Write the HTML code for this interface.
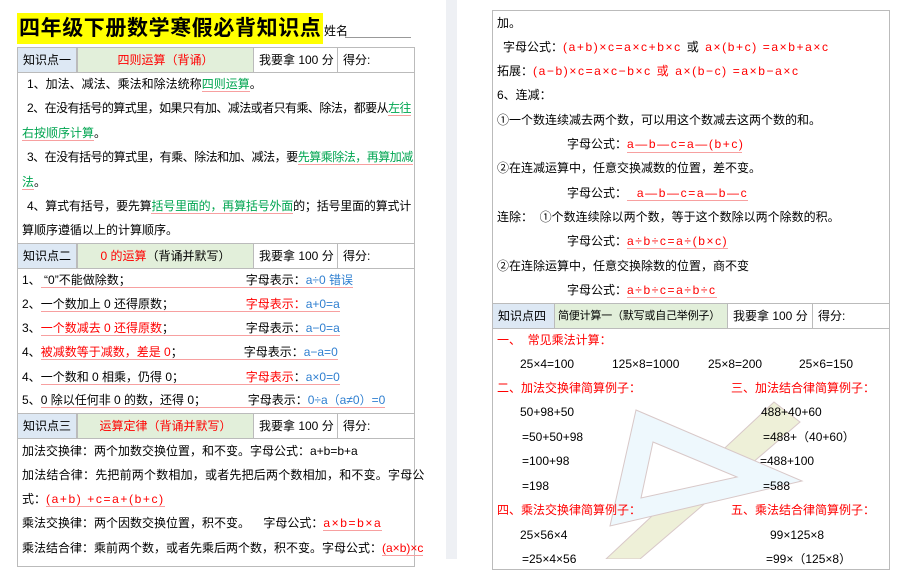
<!DOCTYPE html>
<html><head><meta charset="utf-8"><style>
*{margin:0;padding:0;box-sizing:border-box}
body{width:905px;height:559px;overflow:hidden;background:#fff;position:relative;font-family:"Liberation Sans","Noto Sans CJK SC",sans-serif;font-size:12px;color:#000}
.a{position:absolute;white-space:nowrap;line-height:16px}
.r{color:#f00}.g{color:#00a550}.b{color:#2f7fd0}
.u{border-bottom:1.5px solid #f7a0a0}
.box{position:absolute;border:1px solid #bbb}
.hd{position:absolute;border:1px solid #bbb;height:26px;line-height:24px;padding-left:5px;font-size:12px;overflow:hidden;white-space:nowrap}
.blue{background:#dde8f4}.grn{background:#e2efda}
.ls{letter-spacing:1.6px}
</style></head><body>
<div style="position:absolute;left:446px;top:0;width:11px;height:559px;background:#eef0f4"></div>

<div class="a" style="left:17px;top:13px;width:306px;height:31px;background:#ffff00"></div>
<div class="a" style="left:19px;top:14px;font-size:21px;line-height:30px;font-weight:bold;letter-spacing:0.6px">四年级下册数学寒假必背知识点</div>
<div class="a" style="left:324px;top:23px;font-size:12px">姓名</div>
<div style="position:absolute;left:345px;top:37px;width:66px;border-top:1px solid #999"></div>
<div class="box" style="left:17px;top:47px;width:398px;height:520px"></div>

<div class="hd blue" style="left:17px;top:47px;width:60px">知识点一</div>
<div class="hd grn r" style="left:77px;top:47px;width:177px;text-align:center;padding:0">四则运算（背诵）</div>
<div class="hd" style="left:253px;top:47px;width:85px">我要拿 100 分</div>
<div class="hd" style="left:337px;top:47px;width:78px">得分:</div>

<div class="a" style="left:27px;top:76px">1、加法、减法、乘法和除法统称<span class="g u">四则运算</span>。</div>
<div class="a" style="left:27px;top:100px;letter-spacing:-0.55px">2、在没有括号的算式里，如果只有加、减法或者只有乘、除法，都要从<span class="g u">左往</span></div>
<div class="a" style="left:22px;top:125px"><span class="g u">右按顺序计算</span>。</div>
<div class="a" style="left:27px;top:149px;letter-spacing:-0.5px">3、在没有括号的算式里，有乘、除法和加、减法，要<span class="g u">先算乘除法，再算加减</span></div>
<div class="a" style="left:22px;top:174px"><span class="g u">法</span>。</div>
<div class="a" style="left:27px;top:198px;letter-spacing:-0.2px">4、算式有括号，要先算<span class="g u">括号里面的，再算括号外面</span>的；括号里面的算式计</div>
<div class="a" style="left:22px;top:222px">算顺序遵循以上的计算顺序。</div>

<div class="hd blue" style="left:17px;top:243px;width:60px">知识点二</div>
<div class="hd grn" style="left:77px;top:243px;width:177px;text-align:center;padding:0"><span class="r">0 的运算</span>（背诵并默写）</div>
<div class="hd" style="left:253px;top:243px;width:85px">我要拿 100 分</div>
<div class="hd" style="left:337px;top:243px;width:78px">得分:</div>

<div class="a" style="left:22px;top:272px">1、<span class="u"><span style="display:inline-block;width:205px">&nbsp;“0”不能做除数；</span>字母表示：<span class="b">a÷0 错误</span></span></div>
<div class="a" style="left:22px;top:296px">2、<span class="u"><span style="display:inline-block;width:205px">一个数加上 0 还得原数；</span><span class="r">字母表示：</span><span class="b">a+0=a</span></span></div>
<div class="a" style="left:22px;top:320px">3、<span class="u"><span class="r" style="display:inline-block;width:205px">一个数减去 0 还得原数<span style="color:#000">；</span></span>字母表示：<span class="b">a−0=a</span></span></div>
<div class="a" style="left:22px;top:344px">4、<span class="u"><span class="r" style="display:inline-block;width:203px">被减数等于减数，差是 0<span style="color:#000">；</span></span>字母表示：<span class="b">a−a=0</span></span></div>
<div class="a" style="left:22px;top:369px">4、<span class="u"><span style="display:inline-block;width:205px">一个数和 0 相乘，仍得 0；</span><span class="r">字母表示</span>：<span class="b">a×0=0</span></span></div>
<div class="a" style="left:22px;top:392px">5、<span class="u"><span style="display:inline-block;width:207px">0 除以任何非 0 的数，还得 0；</span>字母表示：<span class="b">0÷a（a≠0）=0</span></span></div>

<div class="hd blue" style="left:17px;top:413px;width:60px">知识点三</div>
<div class="hd grn r" style="left:77px;top:413px;width:177px;text-align:center;padding:0">运算定律（背诵并默写）</div>
<div class="hd" style="left:253px;top:413px;width:85px">我要拿 100 分</div>
<div class="hd" style="left:337px;top:413px;width:78px">得分:</div>

<div class="a" style="left:22px;top:443px">加法交换律：两个加数交换位置，和不变。字母公式：a+b=b+a</div>
<div class="a" style="left:22px;top:467px;letter-spacing:0.2px">加法结合律：先把前两个数相加，或者先把后两个数相加，和不变。字母公</div>
<div class="a" style="left:22px;top:491px">式：<span class="r u ls">(a+b) +c=a+(b+c)</span></div>
<div class="a" style="left:22px;top:515px">乘法交换律：两个因数交换位置，积不变。&nbsp;&nbsp;&nbsp; 字母公式：<span class="r u ls">a×b=b×a</span></div>
<div class="a" style="left:22px;top:540px">乘法结合律：乘前两个数，或者先乘后两个数，积不变。字母公式：<span class="r u">(a×b)×c</span></div>

<div class="box" style="left:492px;top:10px;width:398px;height:560px"></div>
<div class="a" style="left:497px;top:15px">加。</div>
<div class="a" style="left:503px;top:39px">字母公式：<span class="r ls">(a+b)×c=a×c+b×c&nbsp;<span style="color:#000">或</span>&nbsp;a×(b+c) =a×b+a×c</span></div>
<div class="a" style="left:497px;top:63px">拓展：<span class="r ls">(a−b)×c=a×c−b×c&nbsp;或&nbsp;a×(b−c) =a×b−a×c</span></div>
<div class="a" style="left:497px;top:87px">6、连减：</div>
<div class="a" style="left:497px;top:112px">①一个数连续减去两个数，可以用这个数减去这两个数的和。</div>
<div class="a" style="left:567px;top:136px">字母公式：<span class="r u ls" style="display:inline-block;width:115px">a—b—c=a—(b+c)</span></div>
<div class="a" style="left:497px;top:160px">②在连减运算中，任意交换减数的位置，差不变。</div>
<div class="a" style="left:567px;top:185px">字母公式：<span class="r u ls">&nbsp; a—b—c=a—b—c</span></div>
<div class="a" style="left:497px;top:209px">连除：&nbsp; ①个数连续除以两个数，等于这个数除以两个除数的积。</div>
<div class="a" style="left:567px;top:233px">字母公式：<span class="r u ls">a÷b÷c=a÷(b×c)</span></div>
<div class="a" style="left:497px;top:258px">②在连除运算中，任意交换除数的位置，商不变</div>
<div class="a" style="left:567px;top:282px">字母公式：<span class="r u ls">a÷b÷c=a÷b÷c</span></div>

<div class="hd blue" style="left:492px;top:303px;width:63px">知识点四</div>
<div class="hd grn" style="left:554px;top:303px;width:174px;padding-left:3px;font-size:11px;letter-spacing:-0.2px">简便计算一（默写或自己举例子）</div>
<div class="hd" style="left:727px;top:303px;width:86px">我要拿 100 分</div>
<div class="hd" style="left:812px;top:303px;width:78px">得分:</div>

<svg style="position:absolute;left:0;top:0" width="905" height="559">
<polygon points="774,402 800,422 640,559 606,559" fill="#eef0d8" stroke="#d8c8c8" stroke-width="1"/>
<polygon points="636,410 802,481 610,526" fill="#eef8fd" stroke="#d8c8c8" stroke-width="1"/>
<polygon points="653,442 737,477 641,498" fill="#fff" stroke="#d8c8c8" stroke-width="1"/>
</svg>

<div class="a r" style="left:497px;top:332px">一、&nbsp; 常见乘法计算：</div>
<div class="a" style="left:520px;top:356px">25×4=100</div>
<div class="a" style="left:612px;top:356px">125×8=1000</div>
<div class="a" style="left:708px;top:356px">25×8=200</div>
<div class="a" style="left:799px;top:356px">25×6=150</div>
<div class="a r" style="left:497px;top:380px">二、加法交换律简算例子：</div>
<div class="a r" style="left:731px;top:380px">三、加法结合律简算例子：</div>
<div class="a" style="left:520px;top:404px">50+98+50</div>
<div class="a" style="left:761px;top:404px">488+40+60</div>
<div class="a" style="left:522px;top:429px">=50+50+98</div>
<div class="a" style="left:763px;top:429px">=488+（40+60）</div>
<div class="a" style="left:522px;top:453px">=100+98</div>
<div class="a" style="left:760px;top:453px">=488+100</div>
<div class="a" style="left:522px;top:478px">=198</div>
<div class="a" style="left:763px;top:478px">=588</div>
<div class="a r" style="left:497px;top:502px">四、乘法交换律简算例子：</div>
<div class="a r" style="left:731px;top:502px">五、乘法结合律简算例子：</div>
<div class="a" style="left:520px;top:527px">25×56×4</div>
<div class="a" style="left:770px;top:527px">99×125×8</div>
<div class="a" style="left:522px;top:551px">=25×4×56</div>
<div class="a" style="left:766px;top:551px">=99×（125×8）</div>
</body></html>
